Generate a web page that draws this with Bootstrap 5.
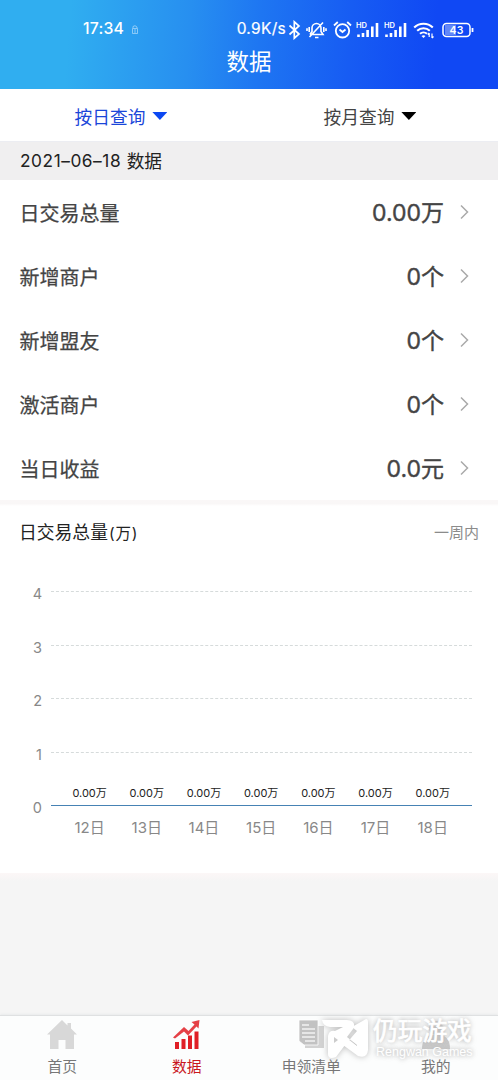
<!DOCTYPE html>
<html lang="zh-CN">
<head>
<meta charset="utf-8">
<meta name="viewport" content="width=device-width, initial-scale=1">
<title>数据</title>
<link rel="stylesheet" href="https://cdn.jsdelivr.net/npm/bootstrap@5.3.0/dist/css/bootstrap.min.css">
<style>
body{font-family:Inter,"Noto Sans CJK SC",sans-serif;background:#f5f5f5;height:1080px;overflow:hidden;line-height:1.2}
.top-bar{height:89px;background:linear-gradient(94deg,#30aef0 0%,#30aef0 14%,#278ff0 38%,#1e76f2 52%,#175cf3 70%,#1048f4 87%,#1048f4 100%)}
.status{height:40px;padding:19px 24px 0 83px;font-size:16px;letter-spacing:.2px}
.status .clock{font-weight:500;font-size:15.8px}
.status .speed{font-size:15.5px;letter-spacing:.3px;-webkit-text-stroke:.2px #fff}
.status svg{display:block;flex:none;fill:none;stroke:#fff}
.page-name{font-size:22.5px;line-height:30px;margin-top:7px}
.tabs{height:52px;font-size:17.7px;color:#444;padding-top:2px}
.tabs span{padding-top:3px}
.tabs .on{color:#1a46d9}
.tabs .opt{padding-right:7px}
.caret{width:15px;height:8px;background:#000;clip-path:polygon(0 0,100% 0,50% 100%);margin-left:7px}
.on .caret{background:#0c48f2}
.date-band{height:39px;background:#f0eff0;padding:1px 20px 0;font-size:17.7px;color:#222;border-top:1px solid #ecedf2}
.date-band .date{font-size:17.3px;letter-spacing:.55px;margin-right:5.5px}
.stat{height:64px;padding:0 28px 0 19.5px;color:#444;font-size:20px}
.stat .name{-webkit-text-stroke:.25px #444;padding-top:3px}
.stat .val{font-size:23px;-webkit-text-stroke:.4px #444;margin-right:15px;padding-top:3px}
.gap-line{height:6px;background:linear-gradient(#faf7f7,#f9f7f7 60%,#fff)}
.chart-head{height:53px;padding:1px 19px 0;font-size:17.8px;color:#222}
.chart-head .paren{font-size:15.5px;letter-spacing:.8px;margin-left:1px}
.chart-head .range{font-size:15px;color:#8b8b8b}
.chart{height:314px;padding-top:32px}
.tick{height:53.5px}
.tick .num{width:42px;font-size:14.5px;color:#888;line-height:20px;margin-top:-7px;text-align:right;flex:none}
.tick .plot{border-top:1px dashed #d6dbdb;margin-left:9px;width:421px}
.tick.base .plot{border-top:1px solid #4682b4}
.series{padding:0 10px}
.series>div{width:57.2px;flex:none;text-align:center}
.vals{font-size:11px;color:#222;padding-bottom:5px}
.days{font-size:15px;color:#888;padding-top:13px}
.end-fade{height:8px;background:linear-gradient(#fcf7f7,#f5f5f5)}
.tab-bar{height:65px;background:#fcfdfd;border-top:1px solid #dfe1e2;box-shadow:0 -1px 2px #eaebec;font-size:14.8px;color:#777}
.tab-bar svg{display:block}
.tab-bar .item{width:124.5px;padding-top:3px}
.tab-bar .item span{margin-top:6px;line-height:20px}
.tab-bar .on{color:#c9171e}
.wm{left:321px;top:1px;color:#fff;text-shadow:0 0 4px #b5b5b5,0 0 7px #ccc}
.wm svg{filter:drop-shadow(0 0 3px #bbb)}
.wm .cn{font-size:24.7px;line-height:28px;margin-left:1px;-webkit-text-stroke:.7px #fff}
.wm .en{font:12.5px/14px "Liberation Sans",sans-serif;padding-left:4px}
</style>
</head>
<body class="d-flex flex-column">
<header class="top-bar text-white flex-shrink-0">
  <div class="status d-flex align-items-center">
    <span class="clock">17:34</span>
    <svg style="margin-left:7px" width="8" height="10" viewBox="0 0 8 10" stroke-width=".7" opacity=".65"><path d="M2 3V1.5L4 .7 6 2V3M1.5 3.5h5v5h-5zM3 5h2M3 7h2"/></svg>
    <span class="speed ms-auto">0.9K/s</span>
    <svg style="margin-left:2px" width="13" height="20" viewBox="0 0 13 20" stroke-width="1.7"><path d="M1.5 5.5 11 14l-4.7 4.2V1.8L11 6 1.5 14.5"/></svg>
    <svg style="margin-left:5px" width="21" height="20" viewBox="0 0 21 20" stroke-width="1.6"><path d="M4 14.5h13l-2-3V8a4.5 4.5 0 0 0-9 0v3.5l-2 3M3.5 17 17 2.5M9 17.5h3.5M3.2 7v5M17.8 7v5M1 8.3v2.6M20 8.3v2.6"/></svg>
    <svg style="margin-left:6px" width="19" height="20" viewBox="0 0 19 20" stroke-width="1.8"><circle cx="9.5" cy="10.8" r="6.7"/><path d="M1 5.5 4.8 2M18 5.5 14.2 2M6.5 9.5l3 2.5 3-2.5"/></svg>
    <svg style="margin-left:4px" width="24" height="20" viewBox="0 0 24 20" stroke-width="2.6"><path d="M2.5 17v-2.5M7 17v-4M11.6 17v-7M16.3 17V6.5M21 17V3"/><text x="0" y="7.5" font-size="7.5" font-weight="600" fill="#fff" stroke="none" letter-spacing="0">HD</text></svg>
    <svg style="margin-left:4px" width="24" height="20" viewBox="0 0 24 20" stroke-width="2.6"><path d="M2.5 17v-2.5M7 17v-4M11.6 17v-7M16.3 17V6.5M21 17V3"/><text x="0" y="7.5" font-size="7.5" font-weight="600" fill="#fff" stroke="none" letter-spacing="0">HD</text></svg>
    <svg style="margin-left:5px" width="22" height="20" viewBox="0 0 22 20" stroke-width="2.1"><path d="M1.2 7.5a13.5 13.5 0 0 1 18.6 0M4.2 10.8a9.2 9.2 0 0 1 12.6 0M7 13.8a5.3 5.3 0 0 1 7 0"/><path d="m10.5 18-2-2q2-1.6 4 0z" fill="#fff" stroke="none"/><path d="M16.2 17v-4m-1.5 1.5 1.5-1.5M19 13.5V18m1.5-1.5L19 18" stroke-width="1.2"/></svg>
    <svg style="margin-left:7px" width="32" height="20" viewBox="0 0 32 20" stroke-width="1.5"><rect x="3" y="5" width="11" height="10" fill="#fff" opacity=".35" stroke="none"/><rect x="1" y="3.5" width="27" height="13" rx="3.5"/><path d="M30.5 8v4" stroke-width="1.8"/><text x="14.5" y="13.7" text-anchor="middle" font-size="10.5" font-weight="600" fill="#fff" stroke="none">43</text></svg>
  </div>
  <div class="page-name text-center">数据</div>
</header>

<div class="tabs d-flex bg-white flex-shrink-0">
  <div class="opt on w-50 d-flex align-items-center justify-content-center"><span>按日查询</span><i class="caret"></i></div>
  <div class="opt w-50 d-flex align-items-center justify-content-center"><span>按月查询</span><i class="caret"></i></div>
</div>
<div class="date-band d-flex align-items-center flex-shrink-0"><span class="date">2021–06–18</span><span>数据</span></div>

<main class="bg-white flex-shrink-0">
  <div class="stat d-flex align-items-center"><span class="name me-auto">日交易总量</span><span class="val">0.00万</span><svg width="11" height="16" viewBox="0 0 11 16" fill="none" stroke="#aaa" stroke-width="1.5"><path d="m2 1.5 6.5 6.5L2 14.5"/></svg></div>
  <div class="stat d-flex align-items-center"><span class="name me-auto">新增商户</span><span class="val">0个</span><svg width="11" height="16" viewBox="0 0 11 16" fill="none" stroke="#aaa" stroke-width="1.5"><path d="m2 1.5 6.5 6.5L2 14.5"/></svg></div>
  <div class="stat d-flex align-items-center"><span class="name me-auto">新增盟友</span><span class="val">0个</span><svg width="11" height="16" viewBox="0 0 11 16" fill="none" stroke="#aaa" stroke-width="1.5"><path d="m2 1.5 6.5 6.5L2 14.5"/></svg></div>
  <div class="stat d-flex align-items-center"><span class="name me-auto">激活商户</span><span class="val">0个</span><svg width="11" height="16" viewBox="0 0 11 16" fill="none" stroke="#aaa" stroke-width="1.5"><path d="m2 1.5 6.5 6.5L2 14.5"/></svg></div>
  <div class="stat d-flex align-items-center"><span class="name me-auto">当日收益</span><span class="val">0.0元</span><svg width="11" height="16" viewBox="0 0 11 16" fill="none" stroke="#aaa" stroke-width="1.5"><path d="m2 1.5 6.5 6.5L2 14.5"/></svg></div>
  <div class="gap-line"></div>
  <div class="chart-head d-flex align-items-center justify-content-between"><span>日交易总量<span class="paren">(万)</span></span><span class="range">一周内</span></div>
  <div class="chart">
    <div class="tick d-flex"><div class="num">4</div><div class="plot"></div></div>
    <div class="tick d-flex"><div class="num">3</div><div class="plot"></div></div>
    <div class="tick d-flex"><div class="num">2</div><div class="plot"></div></div>
    <div class="tick d-flex"><div class="num">1</div><div class="plot d-flex align-items-end">
      <div class="series vals d-flex"><div>0.00万</div><div>0.00万</div><div>0.00万</div><div>0.00万</div><div>0.00万</div><div>0.00万</div><div>0.00万</div></div></div></div>
    <div class="tick base d-flex"><div class="num">0</div><div class="plot">
      <div class="series days d-flex"><div>12日</div><div>13日</div><div>14日</div><div>15日</div><div>16日</div><div>17日</div><div>18日</div></div></div></div>
  </div>
</main>
<div class="end-fade"></div>

<nav class="tab-bar mt-auto d-flex position-relative flex-shrink-0">
  <div class="item d-flex flex-column align-items-center"><svg width="30" height="32" viewBox="0 0 30 32"><path fill="#d8d8d8" d="M15 1 0 15.5h3V30h8.5V21h7v9H27V15.5h3L24 9.5V4h-3.5v2.5z"/></svg><span>首页</span></div>
  <div class="item on d-flex flex-column align-items-center"><svg width="28" height="32" viewBox="0 0 28 32"><g fill="#e01f26"><path d="M2 23h4v7H2zM8.5 20h4v10h-4zM15 16.5h4V30h-4zM21.5 12.5h4V30h-4z"/><path d="m18.5 3 8-2-1 8.5-2-2L15 16.5l-4-4-9 7-2-1 11-10.5 4.500 4 6-6.500z" opacity=".85"/></g></svg><span>数据</span></div>
  <div class="item d-flex flex-column align-items-center"><svg width="27" height="32" viewBox="0 0 27 32"><path fill="#d2d2d2" d="M7 7h19v22H7z"/><path fill="#c2c2c2" stroke="#fff" stroke-width=".8" d="M1 1h19v25H6l-5-4z"/><path stroke="#f2f2f2" stroke-width="1.3" d="M4 6h7M4 10h13M4 14h13M4 18h13M7 22h10"/></svg><span>申领清单</span></div>
  <div class="item d-flex flex-column align-items-center"><svg width="30" height="32" viewBox="0 0 30 32"><g fill="#c8c8c8"><circle cx="15" cy="9" r="7"/><path d="M1 30q0-13 10-14h8q10 1 10 14z"/></g></svg><span>我的</span></div>
  <div class="wm position-absolute d-flex">
    <svg class="flex-shrink-0" width="51" height="44" viewBox="0 0 51 44"><path fill="#fff" d="M1 3h25q10 1 6 9l-6 8 10 8V14L24 28l-9 12q-8 3-8-3V19q1-6 7-5l8-4H9Q2 9 1 3zM31 10 45 2q2 0 2 3v28q-1 9-10 6L22 28l5-6 9 7V14z"/><path fill="#ccc" d="m13 20 4 3-4 3z"/></svg>
    <div><div class="cn">仍玩游戏</div><div class="en">Rengwan Games</div></div>
  </div>
</nav>
<script src="https://cdn.jsdelivr.net/npm/bootstrap@5.3.0/dist/js/bootstrap.bundle.min.js"></script>
</body>
</html>
